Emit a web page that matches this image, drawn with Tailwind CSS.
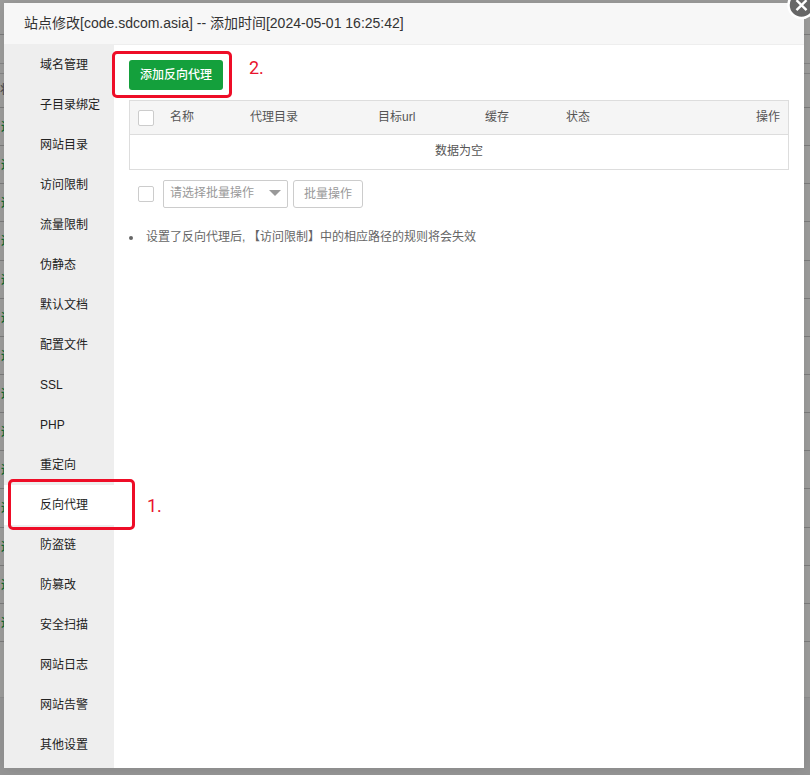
<!DOCTYPE html>
<html lang="zh-CN">
<head>
<meta charset="utf-8">
<title>站点修改</title>
<script src="https://cdn.jsdelivr.net/npm/@tailwindcss/browser@4"></script>
</head>
<body class="relative h-[775px] w-[810px] overflow-hidden bg-[#9d9d9c] font-['Liberation_Sans','Noto_Sans_CJK_SC',sans-serif] text-xs text-[#555]">
<!-- dimmed site list behind the dialog -->
<div class="absolute inset-0 flex flex-col text-[#0f6b33]">
  <div class="h-[35px] shrink-0 border-b border-[#7c7c7c]"></div>
  <div class="h-[29px] shrink-0 border-b border-[#858585]"></div>
  <div class="h-[10px] shrink-0 border-b border-[#858585]"></div>
  <div class="h-[34px] shrink-0 border-b border-[#7c7c7c] pt-[7px] leading-[18px] text-[#444]">状</div>
  <div id="rows" class="flex flex-col"></div>
  <div class="h-[55px] shrink-0"></div>
  <div class="grow border-t border-[#8e8e8e] bg-[#959595]"></div>
</div>

<div class="absolute left-1 top-[3px] flex h-[765px] w-[800px] flex-col bg-white shadow-[0_0_12px_rgba(0,0,0,0.1)]">
  <header class="h-[42px] shrink-0 border-b border-[#eee] bg-[#f7f7f7] pl-5 text-sm leading-[41px] text-[#333]">站点修改[code.sdcom.asia] -- 添加时间[2024-05-01 16:25:42]</header>
  <div class="flex grow">
    <nav class="w-[110px] shrink-0 bg-[#eee] leading-10 text-[#222] *:h-10 *:pl-9">
      <div>域名管理</div>
      <div>子目录绑定</div>
      <div>网站目录</div>
      <div>访问限制</div>
      <div>流量限制</div>
      <div>伪静态</div>
      <div>默认文档</div>
      <div>配置文件</div>
      <div>SSL</div>
      <div>PHP</div>
      <div>重定向</div>
      <div class="bg-white">反向代理</div>
      <div>防盗链</div>
      <div>防篡改</div>
      <div>安全扫描</div>
      <div>网站日志</div>
      <div>网站告警</div>
      <div>其他设置</div>
    </nav>
    <main class="flex w-[690px] flex-col items-start pl-[15px] pt-[15px]">
      <button class="h-[30px] w-[94px] rounded-[3px] bg-[#14a03c] text-xs font-medium leading-[30px] text-white">添加反向代理</button>
      <div class="mt-[10px] h-[70px] w-[660px] border border-[#ddd]">
        <div class="flex h-[34px] items-center border-b border-[#ddd] bg-[#f5f5f5] pl-2 pr-2 leading-[30px]">
          <span class="mr-4 size-4 rounded-[2px] border border-[#ccc] bg-white"></span>
          <span class="-mt-0.5 w-20">名称</span>
          <span class="-mt-0.5 w-32">代理目录</span>
          <span class="-mt-0.5 w-[107px]">目标url</span>
          <span class="-mt-0.5 w-[81px]">缓存</span>
          <span class="-mt-0.5">状态</span>
          <span class="-mt-0.5 ml-auto">操作</span>
        </div>
        <div class="text-center leading-[32px]">数据为空</div>
      </div>
      <div class="mt-[10px] flex h-7 items-center pl-[9px] text-[#999]">
        <span class="mr-[9px] size-4 rounded-[2px] border border-[#ccc] bg-white"></span>
        <div class="mr-[5px] flex h-7 w-[125px] items-center justify-between rounded-[2px] border border-[#ccc] pl-[6px] pr-[6px] leading-[25px]"><span class="-mt-0.5">请选择批量操作</span><svg class="-mt-0.5" width="12" height="6" viewBox="0 0 12 6"><path d="M0 0h12L6 6z" fill="#999"/></svg></div>
        <button class="h-7 w-[70px] rounded-[3px] border border-[#ccc] leading-[26px]">批量操作</button>
      </div>
      <div class="mt-[17px] flex h-6 items-center leading-6 text-[#666]"><span class="mr-[13px] mt-0.5 size-1 rounded-full bg-[#666]"></span><span>设置了反向代理后<span class="tracking-[2.6px]">,</span>【访问限制】中的相应路径的规则将会失效</span></div>
    </main>
  </div>
</div>

<!-- close button -->
<svg class="absolute left-[787px] top-[-12px]" width="32" height="32" viewBox="0 0 32 32"><circle cx="14.5" cy="17" r="13" fill="#666" stroke="#fff" stroke-width="2.5"/><path d="M9.5 12.2l10 10M19.5 12.2l-10 10" stroke="#fff" stroke-width="2.4"/></svg>

<!-- step annotations -->
<div class="absolute left-[112px] top-[51px] h-[47px] w-[120px] rounded-[5px] border-3 border-[#ee0d27]"></div>
<div class="absolute left-[8px] top-[479px] h-[51px] w-[127px] rounded-[5px] border-3 border-[#ee0d27]"></div>
<div class="absolute left-[249px] top-[56px] font-['Roboto',sans-serif] text-[18px] leading-6 text-[#e9142d]">2.</div>
<div class="absolute left-[147px] top-[494px] font-['Roboto',sans-serif] text-[18px] leading-6 text-[#e9142d]">1.</div>
<script>
document.getElementById('rows').innerHTML = Array.from({length: 14}, () =>
  '<div class="h-[38.15px] shrink-0 border-b border-[#7c7c7c] pl-px leading-[38px] font-medium">运</div>').join('');
</script>
</body>
</html>
